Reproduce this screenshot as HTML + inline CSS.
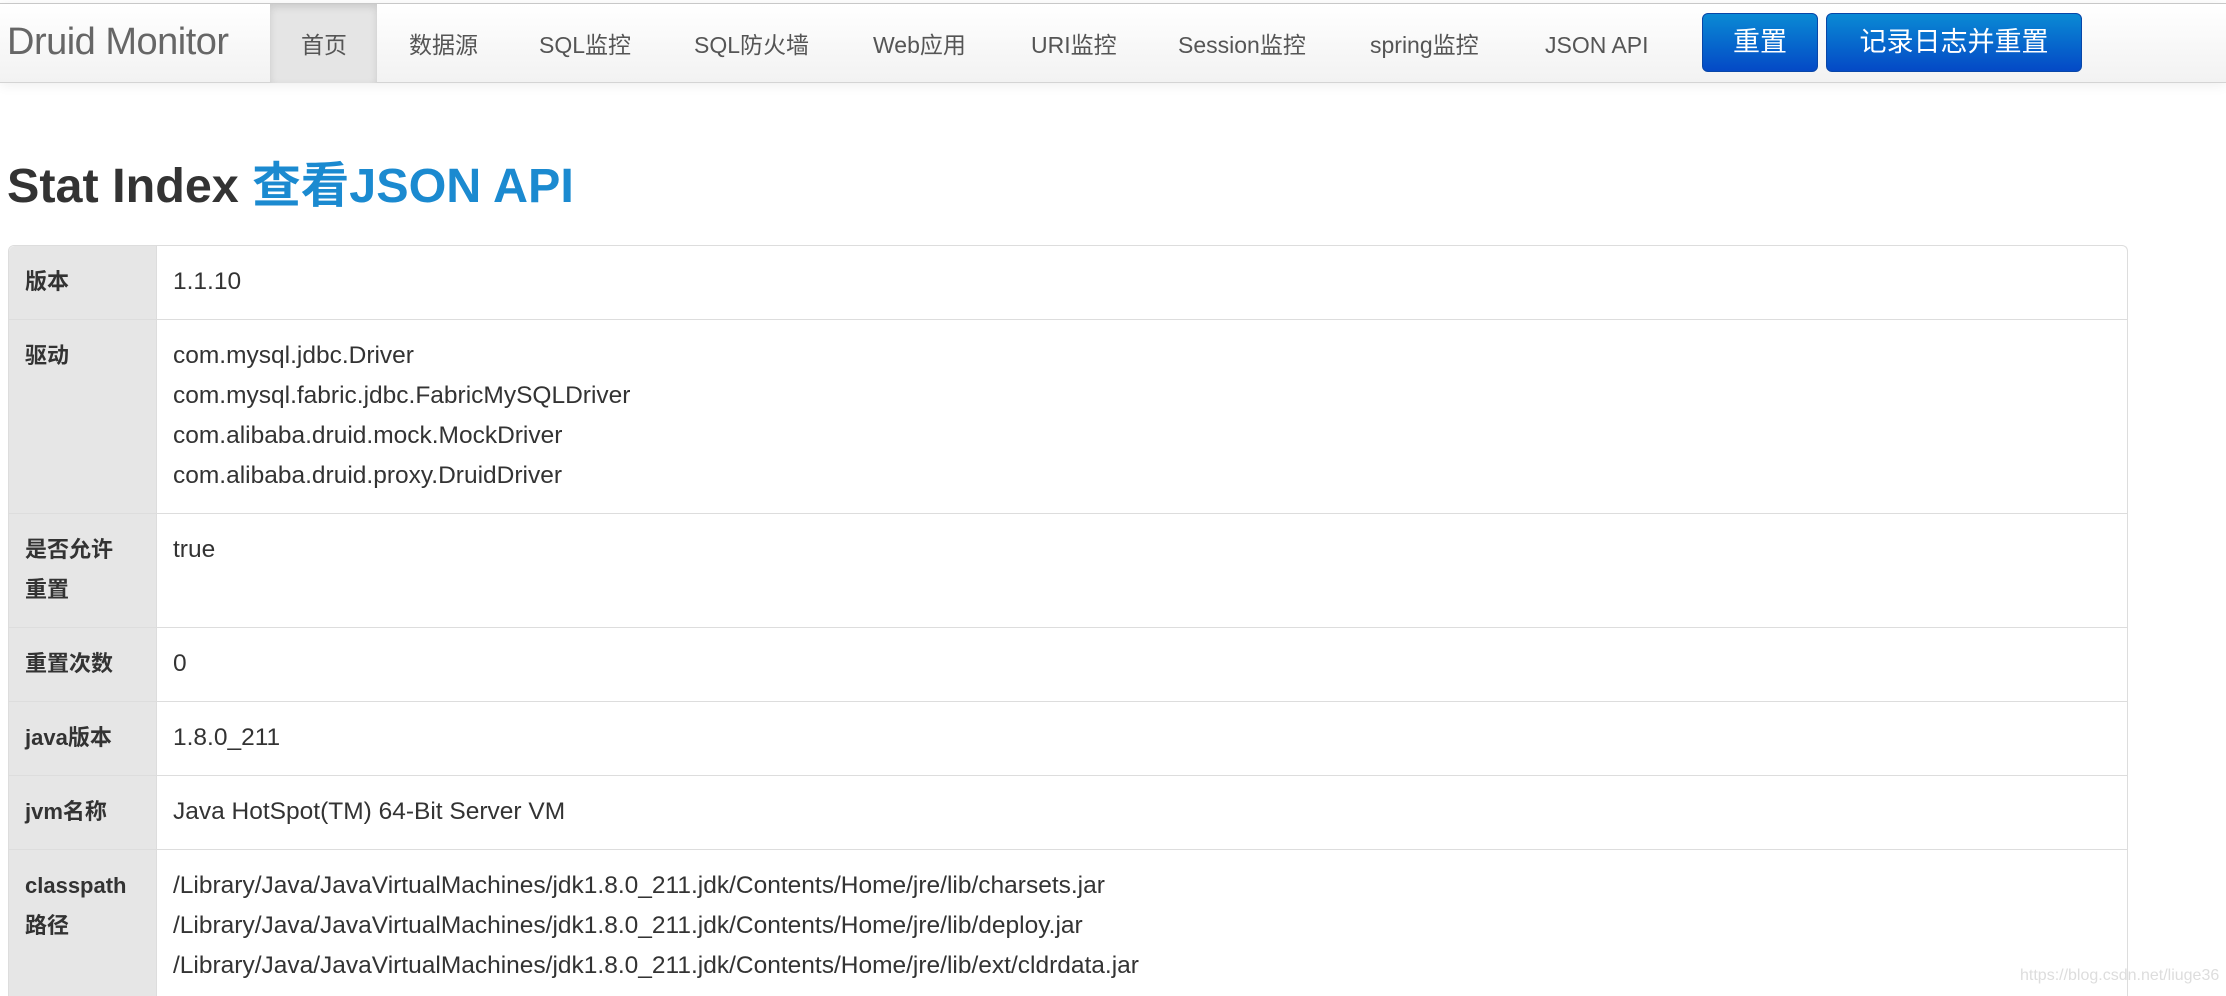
<!DOCTYPE html>
<html><head><meta charset="utf-8"><style>
*{margin:0;padding:0;box-sizing:border-box}
html,body{width:2226px;height:996px;overflow:hidden}
body{background:#fff;font-family:"Liberation Sans","Noto Sans CJK SC",sans-serif;color:#333;position:relative}
.nav{position:absolute;left:0;top:3px;width:2226px;height:80px;background:linear-gradient(#fff,#f2f2f2);border-top:1px solid #c8c8c8;border-bottom:1px solid #d4d4d4;box-shadow:0 2px 12px rgba(0,0,0,.07)}
.brand{position:absolute;left:7px;top:16px;font-size:38px;line-height:44px;color:#666;letter-spacing:-0.5px}
.active{position:absolute;left:270px;top:0;width:107px;height:79px;background:#e5e5e5;box-shadow:inset 0 3px 8px rgba(0,0,0,.12)}
.ni{position:absolute;top:25px;height:32px;line-height:32px;font-size:23px;color:#555;white-space:nowrap}
.btn{position:absolute;top:13px;height:59px;border-radius:6px;background:linear-gradient(#0a8ad4,#0449c6);border:1px solid #0846a8;color:#fff;font-size:27px;text-align:center;line-height:57px}
h1{position:absolute;left:7px;top:158px;font-size:48.5px;line-height:56px;font-weight:bold;color:#333;white-space:nowrap}
h1 span{color:#1b8ad0}
table{position:absolute;left:8px;top:245px;width:2120px;border-collapse:separate;border-spacing:0;border:1px solid #ddd;border-bottom:none;border-radius:6px 6px 0 0;font-size:24.5px}
td{border-bottom:1px solid #ddd;padding:16px 0 17px 16px;line-height:40px;height:40px;vertical-align:top;white-space:nowrap}
td.l{width:148px;background:#e6e6e6;font-weight:bold;font-size:22px;border-right:1px solid #ddd}
tr:first-child td.l{border-top-left-radius:6px}
.wm{position:absolute;left:2020px;top:967px;font-size:16px;color:#ddd}
</style></head><body>
<div class="nav">
<div class="brand">Druid Monitor</div>
<div class="active"></div>
<div class="ni" style="left:301px">首页</div>
<div class="ni" style="left:409px">数据源</div>
<div class="ni" style="left:539px">SQL监控</div>
<div class="ni" style="left:694px">SQL防火墙</div>
<div class="ni" style="left:873px">Web应用</div>
<div class="ni" style="left:1031px">URI监控</div>
<div class="ni" style="left:1178px">Session监控</div>
<div class="ni" style="left:1370px">spring监控</div>
<div class="ni" style="left:1545px">JSON API</div>
</div>
<div class="btn" style="left:1702px;width:116px">重置</div>
<div class="btn" style="left:1826px;width:256px">记录日志并重置</div>
<h1>Stat Index <span>查看JSON API</span></h1>
<table>
<tr><td class="l">版本</td><td>1.1.10</td></tr>
<tr><td class="l">驱动</td><td>com.mysql.jdbc.Driver<br>com.mysql.fabric.jdbc.FabricMySQLDriver<br>com.alibaba.druid.mock.MockDriver<br>com.alibaba.druid.proxy.DruidDriver</td></tr>
<tr><td class="l">是否允许<br>重置</td><td>true</td></tr>
<tr><td class="l">重置次数</td><td>0</td></tr>
<tr><td class="l">java版本</td><td>1.8.0_211</td></tr>
<tr><td class="l">jvm名称</td><td>Java HotSpot(TM) 64-Bit Server VM</td></tr>
<tr><td class="l">classpath<br>路径</td><td>/Library/Java/JavaVirtualMachines/jdk1.8.0_211.jdk/Contents/Home/jre/lib/charsets.jar<br>/Library/Java/JavaVirtualMachines/jdk1.8.0_211.jdk/Contents/Home/jre/lib/deploy.jar<br>/Library/Java/JavaVirtualMachines/jdk1.8.0_211.jdk/Contents/Home/jre/lib/ext/cldrdata.jar</td></tr>
</table>
<div class="wm">https://blog.csdn.net/liuge36</div>
</body></html>
